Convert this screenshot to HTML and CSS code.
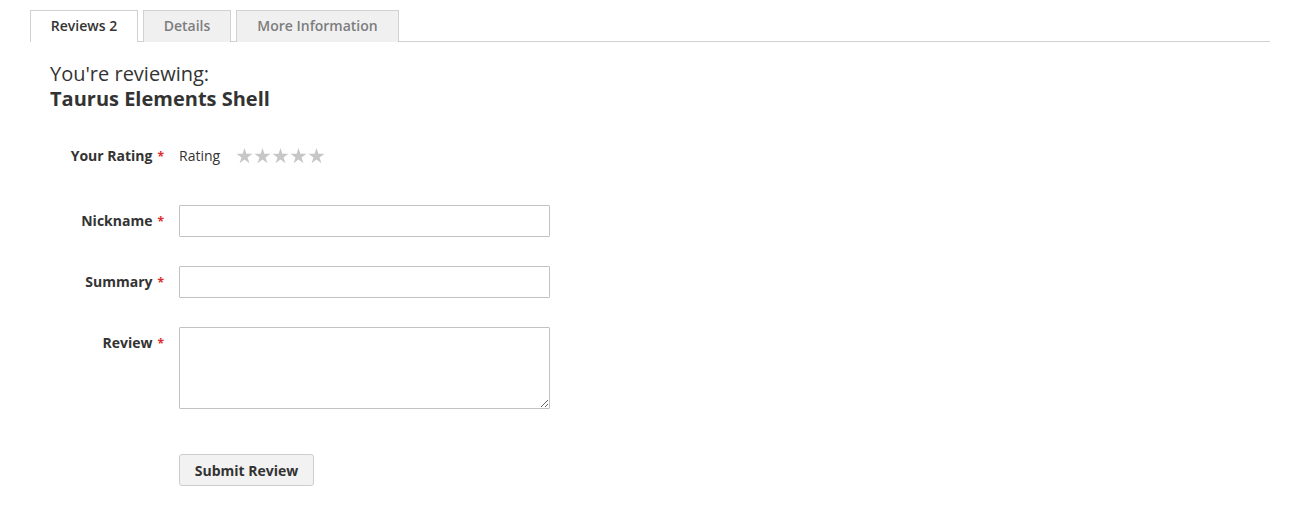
FILE: index.html
```html
<!DOCTYPE html>
<html lang="en">
<head>
<meta charset="utf-8">
<title>Reviews</title>
<link rel="stylesheet" href="styles.css">
</head>
<body>
<div class="page">
  <div class="tabs">
    <div class="tab active">Reviews 2</div>
    <div class="tab">Details</div>
    <div class="tab">More Information</div>
  </div>
  <div class="content">
    <div class="legend">
      <span>You're reviewing:</span>
      <strong>Taurus Elements Shell</strong>
    </div>
    <form class="review-form">
      <div class="field rating-field">
        <div class="label">Your Rating<span class="req">*</span></div>
        <div class="control rating-control">
          <span class="rating-name">Rating</span>
          <span class="stars">
            <svg class="star" viewBox="0 0 17 16" width="17" height="16"><polygon points="8.5,0 10.39,5.8 16.49,5.8 11.55,9.39 13.44,15.2 8.5,11.61 3.56,15.2 5.45,9.39 0.51,5.8 6.61,5.8"/></svg>
            <svg class="star" viewBox="0 0 17 16" width="17" height="16"><polygon points="8.5,0 10.39,5.8 16.49,5.8 11.55,9.39 13.44,15.2 8.5,11.61 3.56,15.2 5.45,9.39 0.51,5.8 6.61,5.8"/></svg>
            <svg class="star" viewBox="0 0 17 16" width="17" height="16"><polygon points="8.5,0 10.39,5.8 16.49,5.8 11.55,9.39 13.44,15.2 8.5,11.61 3.56,15.2 5.45,9.39 0.51,5.8 6.61,5.8"/></svg>
            <svg class="star" viewBox="0 0 17 16" width="17" height="16"><polygon points="8.5,0 10.39,5.8 16.49,5.8 11.55,9.39 13.44,15.2 8.5,11.61 3.56,15.2 5.45,9.39 0.51,5.8 6.61,5.8"/></svg>
            <svg class="star" viewBox="0 0 17 16" width="17" height="16"><polygon points="8.5,0 10.39,5.8 16.49,5.8 11.55,9.39 13.44,15.2 8.5,11.61 3.56,15.2 5.45,9.39 0.51,5.8 6.61,5.8"/></svg>
          </span>
        </div>
      </div>
      <div class="field">
        <label class="label" for="nickname">Nickname<span class="req">*</span></label>
        <div class="control"><input class="input" id="nickname" type="text"></div>
      </div>
      <div class="field">
        <label class="label" for="summary">Summary<span class="req">*</span></label>
        <div class="control"><input class="input" id="summary" type="text"></div>
      </div>
      <div class="field">
        <label class="label" for="review">Review<span class="req">*</span></label>
        <div class="control"><textarea class="textarea" id="review"></textarea></div>
      </div>
      <div class="actions">
        <button class="submit" type="button">Submit Review</button>
      </div>
    </form>
  </div>
</div>
</body>
</html>
```

FILE: styles.css
```css
html, body {
  margin: 0;
  padding: 0;
  background: #fff;
}
body {
  font-family: "Open Sans", "Liberation Sans", sans-serif;
  font-size: 14px;
  color: #333;
}
.page {
  width: 1240px;
  margin-left: 30px;
  padding-top: 10px;
}
.tabs {
  display: flex;
  gap: 5px;
  border-bottom: 1px solid #d1d1d1;
  height: 31px;
}
.tab {
  box-sizing: border-box;
  height: 32px;
  border: 1px solid #d1d1d1;
  border-bottom: none;
  background: #f0f0f0;
  color: #7d7d7d;
  font-weight: 600;
  font-size: 14px;
  line-height: 30px;
  padding: 0 20px;
}
.tab:nth-child(2) { width: 88px; text-align: center; padding: 0; }
.tab:nth-child(3) { width: 163px; text-align: center; padding: 0; }
.tab.active {
  width: 108px;
  text-align: center;
  padding: 0;
  background: #fff;
  color: #333;
  position: relative;
  z-index: 1;
}
.content {
  padding: 19px 0 0 20px;
}
.legend {
  display: flex;
  flex-direction: column;
  font-size: 20px;
  line-height: 25px;
}
.legend strong {
  font-weight: 700;
}
.review-form {
  margin-top: 29px;
}
.field {
  display: flex;
  margin-bottom: 29px;
}
.rating-field {
  margin-bottom: 33px;
  align-items: center;
  height: 32px;
}
.label {
  box-sizing: border-box;
  width: 129px;
  padding-right: 15px;
  text-align: right;
  font-weight: 700;
  font-size: 14px;
  line-height: 20px;
  padding-top: 6px;
  flex-shrink: 0;
}
.rating-field .label {
  padding-top: 0;
}
.req {
  color: #e02b27;
  font-size: 12px;
  margin-left: 5px;
}
.rating-control {
  display: flex;
  align-items: center;
}
.rating-name {
  line-height: 20px;
}
.stars {
  display: flex;
  gap: 1px;
  margin-left: 16px;
  margin-top: -1px;
}
.star {
  display: block;
  fill: #c7c7c7;
}
.input {
  box-sizing: border-box;
  display: block;
  width: 371px;
  height: 32px;
  margin: 0;
  border: 1px solid #c2c2c2;
  border-radius: 1px;
  padding: 0 9px;
  font-family: inherit;
  font-size: 14px;
  outline: none;
}
.textarea {
  box-sizing: border-box;
  display: block;
  width: 371px;
  height: 82px;
  margin: 0;
  border: 1px solid #c2c2c2;
  border-radius: 1px;
  padding: 9px;
  font-family: inherit;
  font-size: 14px;
  resize: vertical;
}
.actions {
  padding-left: 129px;
  padding-top: 16px;
}
.submit {
  box-sizing: border-box;
  height: 32px;
  width: 135px;
  background: #f2f2f2;
  border: 1px solid #cdcdcd;
  border-radius: 3px;
  color: #333;
  font-family: inherit;
  font-weight: 700;
  font-size: 14px;
  padding: 0;
  margin: 0;
}
```
